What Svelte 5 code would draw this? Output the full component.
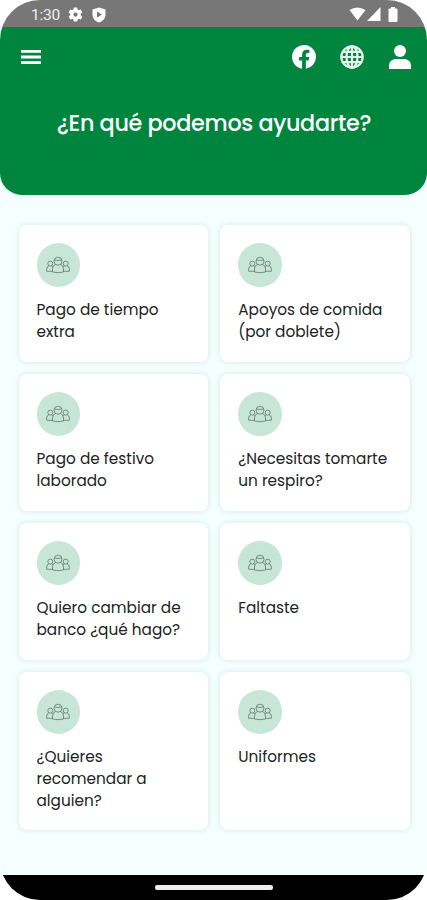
<script lang="ts">
	type Topic = {
		id: string;
		label: string;
	};

	const topics: Topic[] = [
		{ id: 'overtime', label: 'Pago de tiempo\nextra' },
		{ id: 'meals', label: 'Apoyos de comida\n(por doblete)' },
		{ id: 'holiday', label: 'Pago de festivo\nlaborado' },
		{ id: 'break', label: '¿Necesitas tomarte\nun respiro?' },
		{ id: 'bank', label: 'Quiero cambiar de\nbanco ¿qué hago?' },
		{ id: 'absence', label: 'Faltaste' },
		{ id: 'referral', label: '¿Quieres\nrecomendar a\nalguien?' },
		{ id: 'uniforms', label: 'Uniformes' }
	];
</script>

<div class="phone">
	<div class="status-bar">
		<div class="status-left">
			<span class="time">1:30</span>
			<svg class="gear" viewBox="0 0 24 24" width="17" height="17">
				<path d="M19.4 13a7.600 7.600 0 0 0 0-2l2.100-1.650a.5.5 0 0 0 .12-.64l-2-3.460a.5.5 0 0 0-.61-.22l-2.490 1a7.300 7.300 0 0 0-1.690-.98l-.38-2.650A.49.49 0 0 0 14 2h-4a.49.49 0 0 0-.49.42l-.38 2.650c-.61.25-1.170.59-1.690.98l-2.490-1a.5.5 0 0 0-.61.22l-2 3.460a.49.49 0 0 0 .12.64L4.570 11a7.900 7.900 0 0 0 0 2l-2.110 1.650a.5.5 0 0 0-.12.64l2 3.460c.12.22.39.3.61.22l2.490-1c.52.4 1.080.73 1.690.98l.38 2.650c.03.24.24.42.49.42h4c.25 0 .46-.18.49-.42l.38-2.650c.61-.25 1.170-.59 1.690-.98l2.490 1c.23.09.49 0 .61-.22l2-3.460a.5.5 0 0 0-.12-.64zM12 15a3 3 0 1 1 0-6 3 3 0 0 1 0 6z" />
			</svg>
			<svg class="shield" viewBox="0 0 14 16" width="14" height="16">
				<path fill-rule="evenodd" d="M7 .5l6.500 2v5.300c0 3.600-2.700 6.400-6.500 7.700-3.800-1.300-6.500-4.100-6.500-7.700V2.500zM5 4.600v5.800l5-2.900z" />
			</svg>
		</div>
		<div class="status-right">
			<svg viewBox="0 0 17 14" width="17" height="14">
				<path d="M.5 3Q8.500-2 16.500 3L8.500 13.500z" />
			</svg>
			<svg viewBox="0 0 14 14" width="14" height="14">
				<path d="M13.500 0v14H0z" />
			</svg>
			<svg class="battery" viewBox="0 0 10 15" width="10" height="15">
				<path d="M3 0h4v1.500h1.500Q9.500 1.500 9.500 2.500V14q0 1-1 1h-7q-1 0-1-1V2.500q0-1 1-1H3z" />
			</svg>
		</div>
	</div>

	<header>
		<nav>
			<button class="icon-btn" aria-label="Menú">
				<svg viewBox="0 0 20 14" width="20" height="14">
					<path d="M0 0h20v2.800H0zM0 5.600h20v2.800H0zM0 11.200h20V14H0z" />
				</svg>
			</button>
			<div class="nav-actions">
				<button class="icon-btn" aria-label="Facebook">
					<svg viewBox="0 0 24 24" width="24" height="24">
						<path d="M24 12a12 12 0 1 0-13.900 11.850V15.470H7.080V12h3.040V9.360c0-3 1.800-4.670 4.540-4.670 1.300 0 2.680.24 2.680.24v2.950h-1.510c-1.490 0-1.950.93-1.950 1.870V12h3.320l-.53 3.470h-2.800v8.380A12 12 0 0 0 24 12z" />
					</svg>
				</button>
				<button class="icon-btn" aria-label="Idioma">
					<svg class="globe" viewBox="0 0 24 24" width="24" height="24">
						<circle cx="12" cy="12" r="10.700" />
						<ellipse cx="12" cy="12" rx="5.500" ry="10.700" />
						<path d="M12 1v22M1 12h22M3 6.800h18M3 17.200h18" />
					</svg>
				</button>
				<button class="icon-btn" aria-label="Perfil">
					<svg viewBox="0 0 24 24" width="24" height="24">
						<circle cx="12" cy="6" r="6" />
						<path d="M1 24v-3.500C1 16.500 4.500 14 8.500 14h7c4 0 7.500 2.500 7.500 6.500V24z" />
					</svg>
				</button>
			</div>
		</nav>
		<h1>¿En qué podemos ayudarte?</h1>
	</header>

	<main>
		{#each topics as topic (topic.id)}
			<button class="card">
				<span class="badge">
					<svg viewBox="0 0 24 18" width="24" height="18">
						<circle cx="12" cy="5.200" r="4" />
						<path d="M8.300 3.900q3.700 1.300 7.400 0M9.500 8.500Q6.500 9.500 6.500 13v3q5.500 1.400 11 0v-3q0-3.500-3-4.500" />
						<circle cx="4.300" cy="7.600" r="2.500" />
						<circle cx="19.700" cy="7.600" r="2.500" />
						<path d="M6.500 15.300H.7V13q0-2.500 2.200-3.100M5.600 9.900l1.300.8M17.500 15.300h5.800V13q0-2.500-2.200-3.100M18.400 9.900l-1.300.8" />
					</svg>
				</span>
				<span class="label">{topic.label}</span>
			</button>
		{/each}
	</main>

	<footer>
		<div class="home-indicator"></div>
	</footer>
</div>

<style>
	:global(body) {
		background: #fff;
	}

	.phone {
		display: flex;
		flex-direction: column;
		width: 427px;
		height: 900px;
		border-radius: 40px;
		overflow: hidden;
		background: #f5fffe;
		font-family: Poppins, Inter, "Liberation Sans", sans-serif;
	}

	button {
		padding: 0;
		border: none;
		background: none;
		font: inherit;
		cursor: pointer;
	}

	svg {
		display: block;
		fill: #fff;
	}

	.status-bar {
		display: flex;
		justify-content: space-between;
		flex: none;
		box-sizing: border-box;
		height: 27px;
		padding: 0 29px 0 31px;
		background: #777;
	}

	.status-left {
		display: flex;
		align-items: center;
		height: 29px;
	}

	.time {
		width: 36px;
		color: #f0f0f0;
		font-family: Roboto, sans-serif;
		font-size: 15.500px;
		line-height: 20px;
		letter-spacing: -0.2px;
	}

	.shield {
		margin-left: 8px;
	}

	.status-right {
		display: flex;
		align-items: center;
		height: 28px;
		gap: 1px;
	}

	.battery {
		margin-left: 6px;
	}

	header {
		flex: none;
		height: 168px;
		border-radius: 0 0 22px 22px;
		background: #00853e;
	}

	nav {
		display: flex;
		align-items: center;
		justify-content: space-between;
		height: 60px;
		padding: 0 15px 0 21px;
	}

	.nav-actions {
		display: flex;
		gap: 24px;
	}

	.globe {
		fill: none;
		stroke: #e9f6ee;
		stroke-width: 2.2;
	}

	h1 {
		margin: 19px 0 0;
		padding-left: 1px;
		color: #fff;
		font-size: 22.300px;
		font-weight: 500;
		letter-spacing: -0.3px;
		line-height: 35px;
		text-align: center;
		white-space: nowrap;
	}

	main {
		display: grid;
		grid-template-columns: 1fr 1fr;
		grid-template-rows: repeat(3, 137px) 158px;
		gap: 12px;
		flex: 1;
		padding: 30px 17px 0 18.500px;
	}

	.card {
		display: flex;
		flex-direction: column;
		align-items: flex-start;
		padding: 18px;
		border-radius: 8px;
		background: #fff;
		box-shadow: 0 0 5px 1px #d9efe6;
		text-align: left;
	}

	.badge {
		display: flex;
		align-items: center;
		justify-content: center;
		flex: none;
		width: 43.500px;
		height: 43.500px;
		border-radius: 50%;
		background: #c8e6d7;
	}

	.badge svg {
		fill: none;
		stroke: #587267;
		stroke-width: 0.75;
	}

	.label {
		margin-top: 12.500px;
		color: #202322;
		font-size: 15.300px;
		line-height: 22px;
		white-space: pre;
	}

	footer {
		display: flex;
		align-items: center;
		justify-content: center;
		flex: none;
		height: 25px;
		background: #000;
	}

	.home-indicator {
		width: 118px;
		height: 5px;
		border-radius: 2px;
		background: #ededed;
	}
</style>
